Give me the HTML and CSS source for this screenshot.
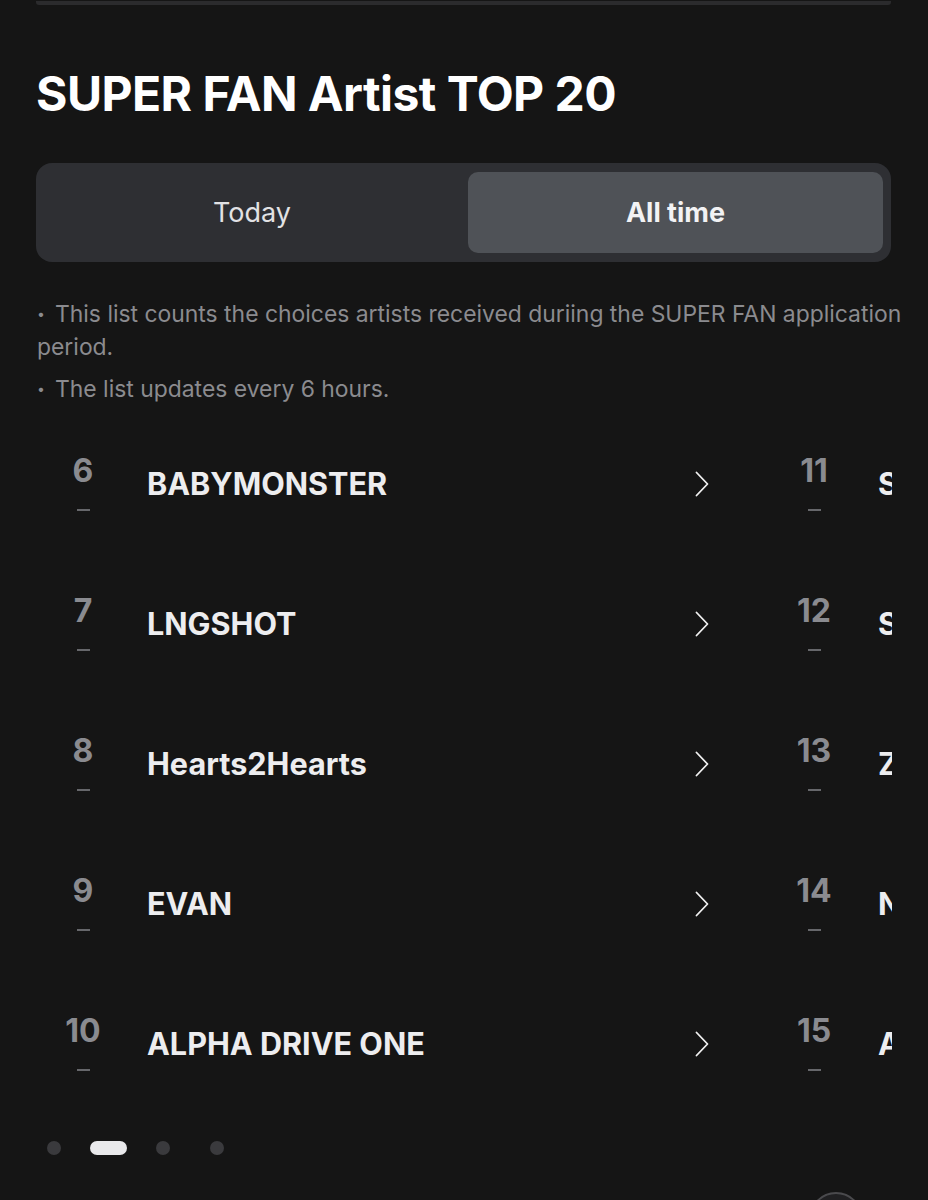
FILE: index.html
```html
<!DOCTYPE html>
<html lang="en">
<head>
<meta charset="utf-8">
<title>SUPER FAN Artist TOP 20</title>
<link rel="stylesheet" href="styles.css">
</head>
<body>
<div class="page">
  <div class="topbar"></div>
  <h1 class="title">SUPER FAN Artist TOP 20</h1>

  <div class="segment">
    <button class="seg-btn">Today</button>
    <button class="seg-btn active">All time</button>
  </div>

  <ul class="notes">
    <li>This list counts the choices artists received duriing the SUPER FAN application period.</li>
    <li>The list updates every 6 hours.</li>
  </ul>

  <div class="carousel">
    <div class="track">
      <ol class="column">
        <li class="row"><div class="rank"><span class="num">6</span><span class="dash"></span></div><span class="name">BABYMONSTER</span><svg class="chev" viewBox="0 0 14 26"><path d="M1.5 1.5 L12.5 13 L1.5 24.5"/></svg></li>
        <li class="row"><div class="rank"><span class="num">7</span><span class="dash"></span></div><span class="name">LNGSHOT</span><svg class="chev" viewBox="0 0 14 26"><path d="M1.5 1.5 L12.5 13 L1.5 24.5"/></svg></li>
        <li class="row"><div class="rank"><span class="num">8</span><span class="dash"></span></div><span class="name">Hearts2Hearts</span><svg class="chev" viewBox="0 0 14 26"><path d="M1.5 1.5 L12.5 13 L1.5 24.5"/></svg></li>
        <li class="row"><div class="rank"><span class="num">9</span><span class="dash"></span></div><span class="name">EVAN</span><svg class="chev" viewBox="0 0 14 26"><path d="M1.5 1.5 L12.5 13 L1.5 24.5"/></svg></li>
        <li class="row"><div class="rank"><span class="num">10</span><span class="dash"></span></div><span class="name">ALPHA DRIVE ONE</span><svg class="chev" viewBox="0 0 14 26"><path d="M1.5 1.5 L12.5 13 L1.5 24.5"/></svg></li>
      </ol>
      <ol class="column">
        <li class="row"><div class="rank"><span class="num">11</span><span class="dash"></span></div><span class="name">S</span></li>
        <li class="row"><div class="rank"><span class="num">12</span><span class="dash"></span></div><span class="name">S</span></li>
        <li class="row"><div class="rank"><span class="num">13</span><span class="dash"></span></div><span class="name">Z</span></li>
        <li class="row"><div class="rank"><span class="num">14</span><span class="dash"></span></div><span class="name">N</span></li>
        <li class="row"><div class="rank"><span class="num">15</span><span class="dash"></span></div><span class="name">A</span></li>
      </ol>
    </div>
  </div>

  <div class="dots">
    <span class="dot"></span>
    <span class="dot active"></span>
    <span class="dot"></span>
    <span class="dot last"></span>
  </div>

  <div class="fab"></div>
</div>
</body>
</html>
```

FILE: styles.css
```css
* { box-sizing: border-box; }

html, body {
  margin: 0;
  padding: 0;
  background: #151515;
}

body {
  font-family: Inter, "Noto Sans", "Liberation Sans", sans-serif;
  color: #ececec;
  overflow: hidden;
}

.page {
  position: relative;
  width: 928px;
  height: 1200px;
  overflow: hidden;
}

.topbar {
  margin: 1px 37px 0 36px;
  height: 4px;
  background: #2b2b2d;
  border-radius: 0 0 3px 3px;
}

.title {
  margin: 0;
  padding: 59px 0 0 36px;
  font-size: 48px;
  line-height: 60px;
  font-weight: 700;
  letter-spacing: -0.55px;
  color: #ffffff;
}

.segment {
  display: flex;
  margin: 39px 37px 0 36px;
  height: 99px;
  padding: 9px 8px 9px 0;
  background: #2e2f33;
  border-radius: 16px;
}

.seg-btn {
  flex: 0 0 432px;
  border: 0;
  background: transparent;
  color: #e2e2e4;
  font-family: inherit;
  font-size: 27px;
  font-weight: 400;
  border-radius: 10px;
  padding: 0;
}

.seg-btn.active {
  flex: 1 1 auto;
  background: #4f5257;
  font-weight: 700;
  color: #f2f2f4;
}

.notes {
  list-style: none;
  margin: 35px 14px 0 37px;
  padding: 0;
  font-size: 22.9px;
  line-height: 33px;
  color: #8b8b8f;
}

.notes li {
  margin-bottom: 8px;
}

.notes li::before {
  content: "•";
  font-size: 14px;
  display: inline-block;
  vertical-align: 3px;
  width: 18px;
}

.carousel {
  margin: 1px 36px 0 37px;
  overflow: hidden;
}

.track {
  display: flex;
}

.column {
  flex: 0 0 731px;
  list-style: none;
  margin: 0;
  padding: 0 59px 0 0;
}

.row {
  display: flex;
  align-items: center;
  height: 140px;
}

.rank {
  width: 92px;
  display: flex;
  flex-direction: column;
  align-items: center;
  flex-shrink: 0;
}

.num {
  font-size: 32px;
  line-height: 32px;
  font-weight: 700;
  color: #8a8b90;
  margin-top: -2px;
}

.dash {
  width: 13px;
  height: 2px;
  background: #66676b;
  margin-top: 22px;
}

.name {
  flex: 1;
  margin-left: 18px;
  font-size: 30.6px;
  line-height: 36px;
  font-weight: 700;
  color: #ededef;
  white-space: nowrap;
  margin-top: -1px;
}

.chev {
  width: 14px;
  height: 26px;
  fill: none;
  stroke: #f2f2f2;
  stroke-width: 1.8;
  stroke-linecap: round;
  stroke-linejoin: round;
}

.dots {
  display: flex;
  align-items: center;
  margin: 27px 0 0 47px;
  height: 14px;
}

.dot {
  width: 14px;
  height: 14px;
  border-radius: 7px;
  background: #3a3a3d;
  margin-right: 29px;
}

.dot.active {
  width: 37px;
  background: #e9e9eb;
}

.dot:nth-child(3) {
  margin-right: 40px;
}

.fab {
  position: absolute;
  left: 809px;
  top: 1192px;
  width: 54px;
  height: 54px;
  border-radius: 50%;
  background: #202022;
  border: 2px solid #4a4a4d;
}
```
